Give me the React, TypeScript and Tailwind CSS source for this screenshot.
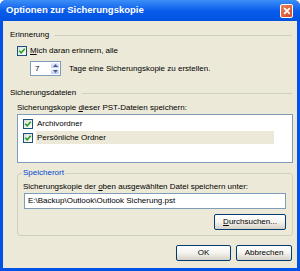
import React from "react";

const font = { fontFamily: '"Liberation Sans", Arial, sans-serif' };

function Check({ className = "" }: { className?: string }) {
  return (
    <div
      className={
        "w-[10px] h-[10px] border border-[#1C5180] bg-gradient-to-br from-[#DCDCD7] to-[#FFFFFF] flex items-center justify-center shrink-0 " +
        className
      }
    >
      <svg width="8" height="8" viewBox="0 0 8 8">
        <path d="M1.2 3.8 L3.2 5.8 L6.8 1.8" stroke="#21A121" strokeWidth="1.6" fill="none" />
      </svg>
    </div>
  );
}

function Btn({ children, className = "" }: { children: React.ReactNode; className?: string }) {
  return (
    <div
      className={
        "h-[16px] border border-[#003C74] rounded-[2px] bg-gradient-to-b from-[#FFFFFF] via-[#F4F3EE] to-[#D6D0C5] flex items-center justify-center text-black " +
        className
      }
    >
      {children}
    </div>
  );
}

export default function App() {
  return (
    <div className="w-[300px] h-[271px] bg-white" style={font}>
      <div className="w-[300px] h-[271px] flex flex-col bg-[#0053E6] rounded-t-[6px] overflow-hidden">
        <div className="h-[21px] shrink-0 flex items-center pl-[6px] pr-[7px] bg-gradient-to-b from-[#3D8FF7] via-[#0A5DEB] to-[#0052E0]">
          <div className="flex-1 text-white font-bold text-[9.5px]">Optionen zur Sicherungskopie</div>
          <div className="w-[13px] h-[14px] rounded-[2px] border border-white bg-gradient-to-br from-[#E8845E] to-[#D4471F] flex items-center justify-center">
            <svg width="8" height="8" viewBox="0 0 8 8">
              <path d="M1.2 1.2 L6.8 6.8 M6.8 1.2 L1.2 6.8" stroke="white" strokeWidth="1.7" />
            </svg>
          </div>
        </div>
        <div className="flex-1 mx-[3px] mb-[3px] bg-[#ECE9D8] flex flex-col text-[8px] text-black leading-[10px]">
          {/* Erinnerung */}
          <div className="mt-[9px] ml-[7px] mr-[5px] flex items-center h-[10px]">
            <span>Erinnerung</span>
            <div className="flex-1 ml-[5px] h-[1px] bg-[#D0D0BF]" />
          </div>
          <div className="mt-[5px] ml-[14px] flex items-center h-[12px]">
            <Check />
            <span className="ml-[3px]">
              <span className="underline">M</span>ich daran erinnern, alle
            </span>
          </div>
          <div className="mt-[4px] ml-[27px] flex items-center h-[15px]">
            <div className="w-[31px] h-[15px] border border-[#7F9DB9] bg-white flex items-stretch">
              <div className="flex-1 pl-[4px] flex items-center">7</div>
              <div className="w-[9px] flex flex-col gap-[1px] p-[1px] pl-0">
                <div className="flex-1 rounded-[1px] bg-gradient-to-b from-[#E6EEFC] to-[#B9CCF5] flex items-center justify-center">
                  <svg width="5" height="3" viewBox="0 0 5 3"><path d="M0 3 L2.5 0 L5 3 Z" fill="#4D6185" /></svg>
                </div>
                <div className="flex-1 rounded-[1px] bg-gradient-to-b from-[#E6EEFC] to-[#B9CCF5] flex items-center justify-center">
                  <svg width="5" height="3" viewBox="0 0 5 3"><path d="M0 0 L2.5 3 L5 0 Z" fill="#4D6185" /></svg>
                </div>
              </div>
            </div>
            <span className="ml-[8px]">Tage eine Sicherungskopie zu erstellen.</span>
          </div>
          {/* Sicherungsdateien */}
          <div className="mt-[12px] ml-[7px] mr-[5px] flex items-center h-[10px]">
            <span>Sicherungsdateien</span>
            <div className="flex-1 ml-[6px] h-[1px] bg-[#D0D0BF]" />
          </div>
          <div className="mt-[5px] ml-[14px] h-[10px]">
            Sicherungskopie <span className="underline">d</span>ieser PST-Dateien speichern:
          </div>
          <div className="mt-[1px] ml-[14px] mr-[4px] h-[49px] border border-[#7F9DB9] bg-white flex flex-col pt-[3px]">
            <div className="flex items-center h-[12px] pl-[5px]">
              <Check />
              <span className="ml-[4px]">Archivordner</span>
            </div>
            <div className="flex items-center h-[13px] pl-[5px] mt-[1px]">
              <Check />
              <span className="ml-[3px] pl-[1px] w-[238px] h-[13px] bg-[#ECE9D8] flex items-center">Persönliche Ordner</span>
            </div>
          </div>
          {/* Speicherort */}
          <fieldset className="mt-[5px] ml-[14px] mr-[4px] h-[68px] border border-[#D0D0BF] rounded-[3px] px-[5px]">
            <legend className="text-[#0046D5] px-[1px] ml-[-1px]">Speicherort</legend>
            <div className="h-[10px] mt-[4px]">
              Sicherungskopie der <span className="underline">o</span>ben ausgewählten Datei speichern unter:
            </div>
            <div className="mt-[1px] ml-[1px] mr-[1px] h-[16px] border border-[#7F9DB9] bg-white flex items-center pl-[3px]">
              E:\Backup\Outlook\Outlook Sicherung.pst
            </div>
            <div className="flex justify-end mt-[5px] mr-[1px]">
              <Btn className="w-[72px] h-[15px]">
                <span><span className="underline">D</span>urchsuchen...</span>
              </Btn>
            </div>
          </fieldset>
          <div className="flex justify-end mt-[9px] mr-[5px] gap-[5px]">
            <Btn className="w-[55px]">OK</Btn>
            <Btn className="w-[56px]">Abbrechen</Btn>
          </div>
        </div>
      </div>
    </div>
  );
}
